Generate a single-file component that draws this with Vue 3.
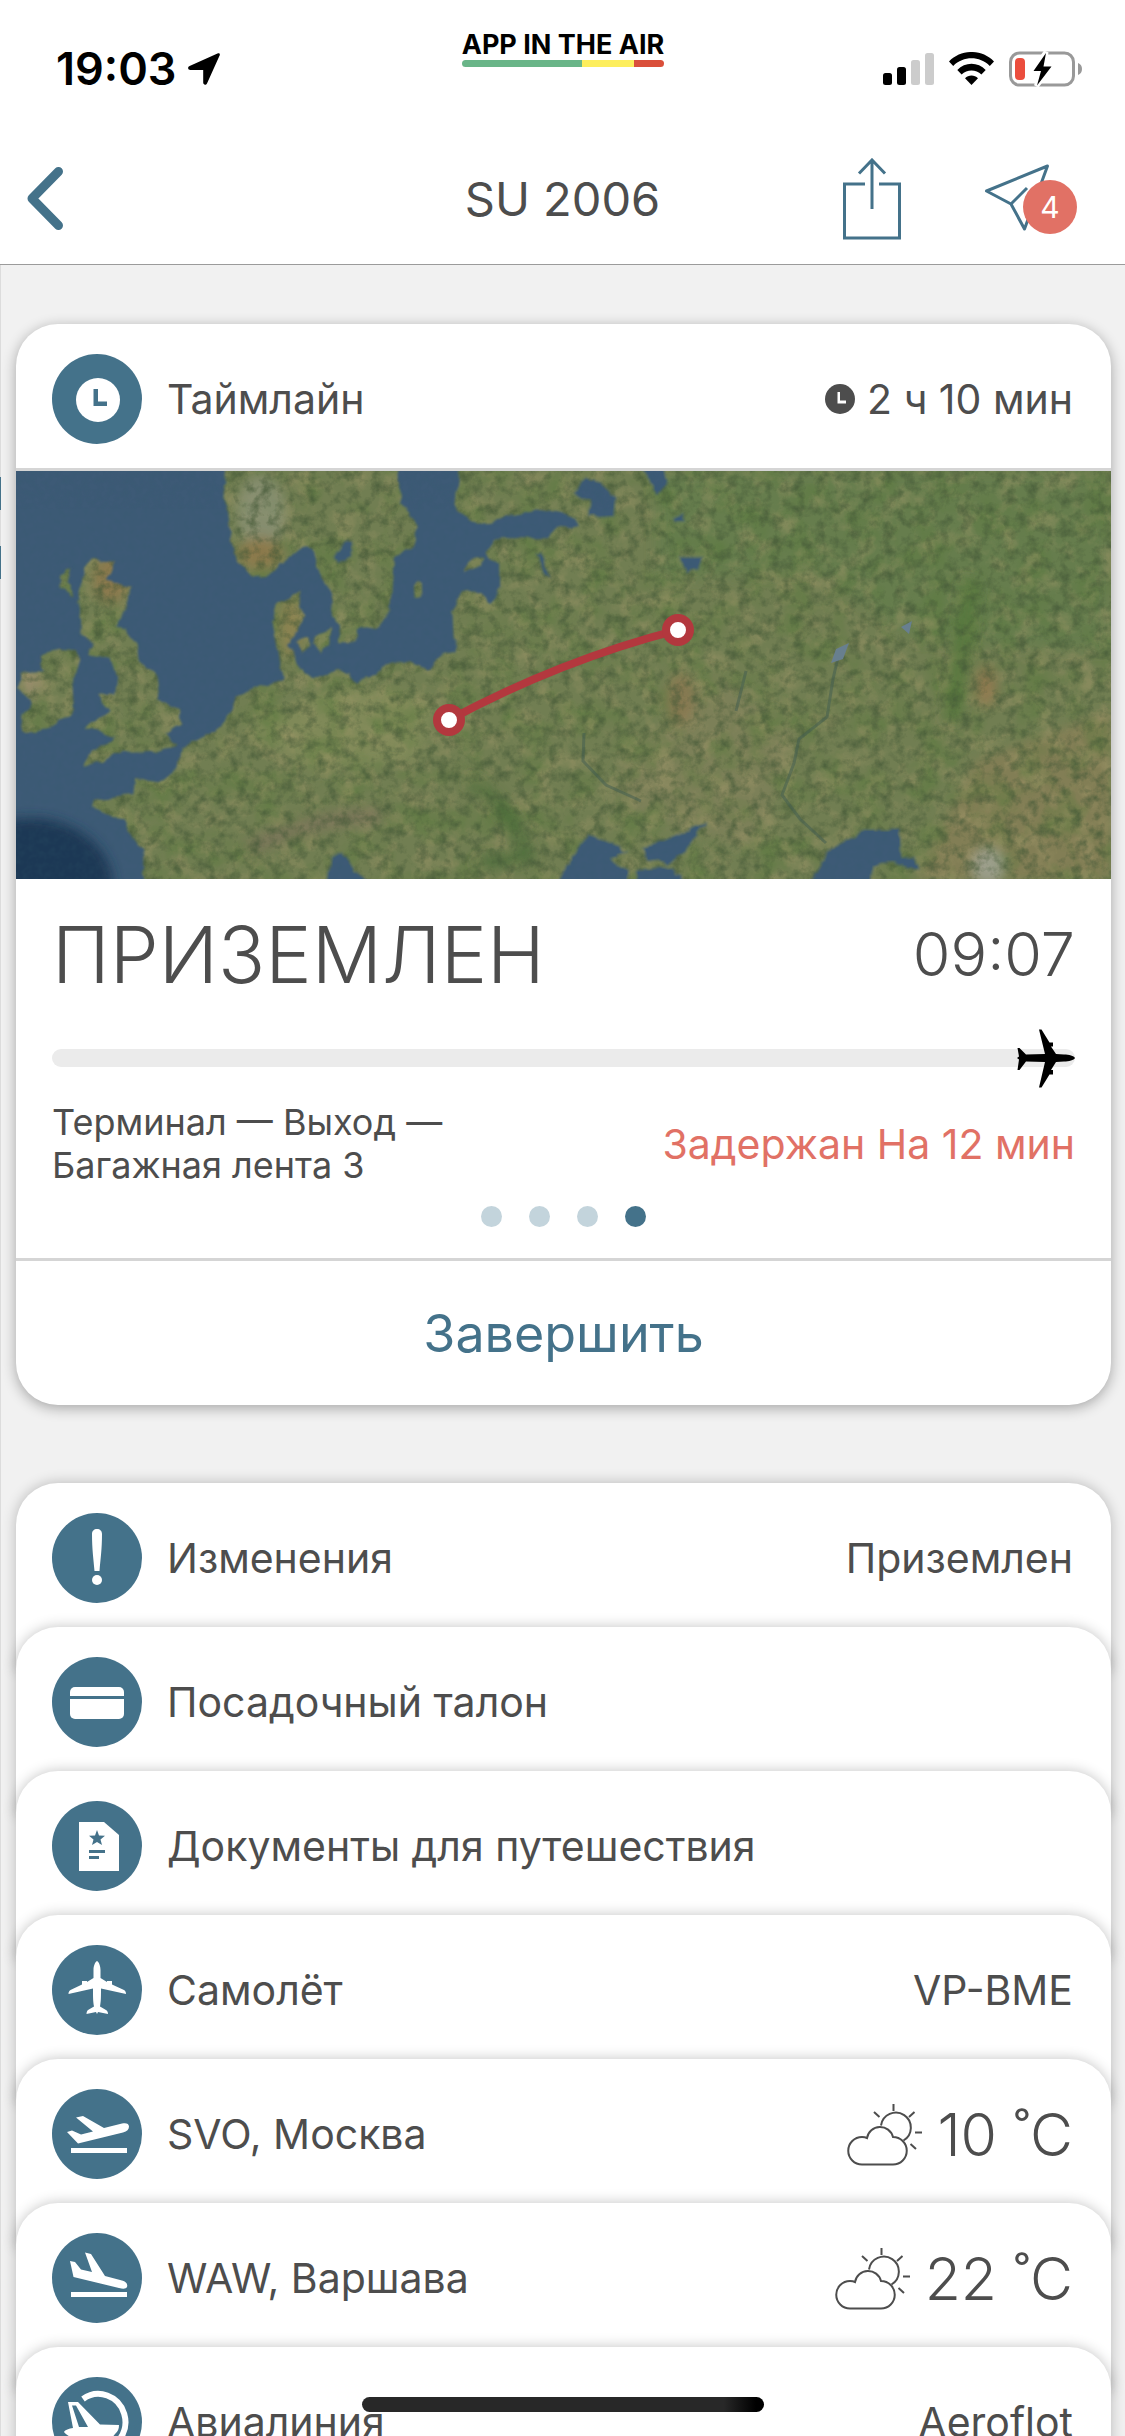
<script setup>
import { ref } from 'vue'

const pages = 4
const activePage = ref(3)

const rows = [
  { icon: 'alert', label: 'Изменения', value: 'Приземлен' },
  { icon: 'card', label: 'Посадочный талон' },
  { icon: 'document', label: 'Документы для путешествия' },
  { icon: 'plane', label: 'Самолёт', value: 'VP-BME' },
  { icon: 'takeoff', label: 'SVO, Москва', temperature: '10 ˚C' },
  { icon: 'landing', label: 'WAW, Варшава', temperature: '22 ˚C' },
  { icon: 'airline', label: 'Авиалиния', value: 'Aeroflot' }
]
</script>

<template>
  <div class="screen">
    <header class="top">
      <div class="status">
        <div class="clock">
          <span>19:03</span>
          <svg class="location" viewBox="0 0 32 32" aria-hidden="true">
            <path d="M29.500 .6 C31.200 -.2 32.400 1 31.600 2.600 L19 30.400 C18 32.600 15.200 32 15.200 29.600 V17 H2.600 C-.2 17-.8 14 1.600 13Z" />
          </svg>
        </div>
        <div class="brand">
          <strong>APP IN THE AIR</strong>
          <div class="brand-bar"><i class="ok"></i><i class="warn"></i><i class="bad"></i></div>
        </div>
        <div class="indicators">
          <svg class="signal" viewBox="0 0 51 33" aria-hidden="true">
            <rect x="0" y="21" width="9" height="12" rx="2.500" />
            <rect x="14" y="15" width="9" height="18" rx="2.500" />
            <rect x="28" y="8" width="9" height="25" rx="2.500" fill="#ccc" />
            <rect x="42" y="1" width="9" height="32" rx="2.500" fill="#ccc" />
          </svg>
          <svg class="wifi" viewBox="0 0 45 33" aria-hidden="true">
            <path d="M0 9.500 C12-3.200 33-3.200 45 9.500 L40.800 14 C30.500 3.800 14.500 3.800 4.200 14Z" />
            <path d="M8.300 18 C16 9.700 29 9.700 36.700 18 L32.400 22.600 C27 17 18 17 12.600 22.600Z" />
            <path d="M16 26.200 C19.500 22.500 25.500 22.500 29 26.200 L22.500 33Z" />
          </svg>
          <svg class="battery" viewBox="0 0 74 36" aria-hidden="true">
            <rect x="1.500" y="2" width="63" height="32" rx="9" fill="none" stroke="#999" stroke-width="3" />
            <path d="M69 12 q4 1.500 4 6 t-4 6Z" fill="#999" />
            <rect x="6" y="7" width="10" height="22" rx="4" fill="#eb4d3d" />
            <path d="M37 1 L24 20 H31.500 L27.500 35 L42.500 15.500 H35Z" stroke="#fff" stroke-width="5" />
            <path d="M37 2 L24.500 20 H32 L28 34.500 L42.500 15.500 H34.500Z" />
          </svg>
        </div>
      </div>

      <nav class="nav">
        <button class="icon-button back" aria-label="Назад">
          <svg viewBox="0 0 36 63"><path d="M31.500 4.500 L5 31.500 L31.500 58.500" /></svg>
        </button>
        <h1>SU 2006</h1>
        <div class="actions">
          <button class="icon-button share" aria-label="Поделиться">
            <svg viewBox="0 0 58 82">
              <path d="M22 26 H1.500 V80 H56.500 V26 H36 M29 51 V2 M16 15.500 L29 2 L42 15.500" />
            </svg>
          </button>
          <button class="icon-button send" aria-label="Сообщения">
            <svg viewBox="0 0 64 70">
              <path d="M1.500 27 L62.500 2 L39.500 65 L26 40 Z M26 40 L42 24" />
            </svg>
            <span class="badge">4</span>
          </button>
        </div>
      </nav>
    </header>

    <main class="content">
      <section class="card">
        <header class="row">
          <span class="disc">
            <svg viewBox="0 0 90 90" aria-hidden="true">
              <circle cx="46" cy="46" r="22" />
              <path class="cut" d="M41.500 35 H46 V47.500 H55 V52 H41.500Z" />
            </svg>
          </span>
          <h2 class="label">Таймлайн</h2>
          <span class="value duration">
            <svg viewBox="0 0 30 30" aria-hidden="true">
              <circle cx="15" cy="15" r="15" fill="#4d4d4d" />
              <path d="M12.500 8 H15 V16.500 H21 V19.500 H12.500Z" fill="#fff" />
            </svg>
            2 ч 10 мин
          </span>
        </header>

        <svg class="map" viewBox="0 0 1095 408" role="img" aria-label="Маршрут Москва — Варшава">
          <defs>
            <filter id="grain" x="0" y="0" width="100%" height="100%" color-interpolation-filters="sRGB">
              <feTurbulence type="fractalNoise" baseFrequency="0.09 0.09" numOctaves="4" seed="8" />
              <feColorMatrix values="0 0 0 0 .27  0 0 0 0 .35  0 0 0 0 .22  2.400 0 0 0 -1.050" />
            </filter>
            <filter id="sand" x="0" y="0" width="100%" height="100%" color-interpolation-filters="sRGB">
              <feTurbulence type="fractalNoise" baseFrequency="0.05 0.05" numOctaves="5" seed="21" />
              <feColorMatrix values="0 0 0 0 .64  0 0 0 0 .6  0 0 0 0 .42  0 2.600 0 0 -1.200" />
            </filter>
            <filter id="moss" x="0" y="0" width="100%" height="100%" color-interpolation-filters="sRGB">
              <feTurbulence type="fractalNoise" baseFrequency="0.03 0.03" numOctaves="4" seed="4" />
              <feColorMatrix values="0 0 0 0 .36  0 0 0 0 .48  0 0 0 0 .25  0 0 2.600 0 -1.150" />
            </filter>
            <filter id="wave" x="0" y="0" width="100%" height="100%" color-interpolation-filters="sRGB">
              <feTurbulence type="fractalNoise" baseFrequency="0.15" numOctaves="2" seed="2" />
              <feColorMatrix values="0 0 0 0 .2  0 0 0 0 .36  0 0 0 0 .42  1 0 0 0 -.35" />
            </filter>
            <filter id="coast" x="-5%" y="-5%" width="110%" height="110%">
              <feTurbulence type="fractalNoise" baseFrequency="0.06" numOctaves="3" seed="5" result="n" />
              <feDisplacementMap in="SourceGraphic" in2="n" scale="9" xChannelSelector="R" yChannelSelector="G" />
              <feGaussianBlur stdDeviation="1" />
            </filter>
            <filter id="haze" x="-50%" y="-50%" width="200%" height="200%">
              <feGaussianBlur stdDeviation="6" />
            </filter>
            <mask id="land-mask">
              <g filter="url(#coast)">
                <g transform="translate(-16 -11) scale(.3604 .3333)">
                  <g fill="#fff">
                    <path d="M630 20 L625 120 640 240 655 300 700 350 740 345 790 310 810 275 850 265 870 270 880 320 915 400 930 480 945 550 990 550 990 510 1050 500 1080 460 1090 300 1140 260 1165 200 1110 130 1105 20Z" />
                    <path d="M1275 20 L1265 150 1330 195 1400 170 1500 150 1600 170 1600 195 1540 210 1520 235 1370 235 1350 280 1385 310 1385 400 1360 430 1330 400 1280 395 1255 450 1260 570 1210 600 1190 635 1140 600 1080 615 990 665 970 640 920 635 870 660 830 625 805 560 845 470 830 440 840 390 770 425 755 480 770 560 785 660 720 680 650 710 650 750 590 820 505 860 495 920 440 970 375 960 370 1000 260 1020 255 1040 350 1085 370 1140 400 1180 400 1290 3150 1290 3150 20Z" />
                    <path d="M250 300 L320 305 290 360 365 380 360 415 335 460 325 500 350 515 380 560 385 600 430 640 440 720 500 745 500 790 460 820 490 850 440 875 310 880 290 905 235 920 250 880 290 845 320 830 240 800 270 775 310 760 270 705 320 700 325 650 305 600 250 585 260 545 220 520 225 450 215 400 240 320Z" />
                    <path d="M110 590 L150 565 205 570 220 610 200 650 205 740 180 775 100 820 55 810 60 760 90 730 50 680 60 640 120 630Z" />
                    <path d="M165 345 L195 320 185 370 205 410 175 385Z M820 545 L845 530 862 560 840 578Z M872 530 L915 500 918 550 890 578 868 555Z M1143 385 L1165 365 1166 410 1145 418Z M1285 335 L1300 300 1345 290 1330 320Z" />
                  </g>
                  <g fill="#000">
                    <path d="M925 290 L950 245 982 250 975 290 940 312Z M1488 280 L1505 275 1522 355 1505 345Z M905 1290 L915 1190 945 1172 975 1215 1040 1290Z" />
                    <g transform="translate(1554 0)">
                      <path d="M40 95 L65 55 110 65 155 110 150 170 80 175 82 125Z M215 20 H285 L297 75 270 105 245 60Z M325 290 L395 290 385 330 355 335Z M315 165 L345 160 345 185 320 185Z" />
                      <path d="M-20 1290 L30 1190 80 1125 130 1145 190 1170 140 1200 190 1225 180 1290Z M230 1165 L310 1130 405 1085 345 1180 305 1215 240 1200Z M200 1290 L215 1230 320 1220 360 1290Z" />
                      <path d="M680 1290 L740 1180 840 1110 945 1110 948 1190 990 1190 998 1232 920 1212 865 1215 860 1290Z" />
                    </g>
                  </g>
                </g>
              </g>
            </mask>
          </defs>

          <rect width="1095" height="408" fill="#3d5a76" />
          <ellipse cx="15" cy="415" rx="82" ry="68" fill="#1d3855" filter="url(#haze)" />
          <rect width="1095" height="408" filter="url(#wave)" opacity=".35" />

          <g mask="url(#land-mask)">
            <rect width="1095" height="408" fill="#717e52" />
            <g filter="url(#haze)">
              <path d="M225 258 L275 235 Q330 200 420 230 L400 290 300 300Z" fill="#7f8958" />
              <path d="M600 300 L700 200 780 260 740 380 600 340Z" fill="#7b8059" />
              <path d="M640 0 H1095 V180 L900 170 800 100 640 110Z" fill="#667d4d" />
              <path d="M960 290 L1095 240 V408 H900Z" fill="#827e54" />
            </g>
            <rect width="1095" height="408" filter="url(#moss)" opacity=".6" />
            <rect width="1095" height="408" filter="url(#sand)" opacity=".45" />
            <g filter="url(#haze)" opacity=".8">
              <ellipse cx="245" cy="42" rx="24" ry="38" fill="#929780" opacity=".8" />
              <ellipse cx="244" cy="82" rx="22" ry="16" fill="#93794b" />
              <ellipse cx="95" cy="108" rx="18" ry="24" fill="#93794d" />
              <ellipse cx="14" cy="213" rx="9" ry="18" fill="#a39173" />
              <ellipse cx="275" cy="157" rx="12" ry="30" fill="#918451" />
              <path d="M232 378 Q300 345 365 345" fill="none" stroke="#7d755c" stroke-width="16" />
              <path d="M452 308 Q495 335 512 385 L460 394" fill="none" stroke="#476a38" stroke-width="12" />
              <ellipse cx="665" cy="228" rx="14" ry="26" fill="#8c7851" />
              <path d="M955 110 L936 250" fill="none" stroke="#52773a" stroke-width="18" />
              <ellipse cx="972" cy="395" rx="17" ry="19" fill="#a3a598" />
              <ellipse cx="970" cy="215" rx="10" ry="20" fill="#957850" />
            </g>
            <rect width="1095" height="408" filter="url(#grain)" opacity=".7" />
            <path d="M824 178 L817 208 811 246 783 268 778 292 766 324 784 348 810 372 M568 262 L567 290 590 314 625 330 M730 200 L720 240" fill="none" stroke="#3f5c50" stroke-width="3" opacity=".5" />
            <path d="M820 178 L833 172 827 188 815 192Z M885 156 L896 150 893 163Z" fill="#687f8f" />
          </g>

          <path d="M433 249 Q545 189 662 159" fill="none" stroke="#b3383e" stroke-width="8" />
          <g fill="#fff" stroke="#b3383e" stroke-width="8">
            <circle cx="433" cy="249" r="12" />
            <circle cx="662" cy="159" r="12" />
          </g>
        </svg>

        <div class="flight">
          <div class="state">
            <strong>ПРИЗЕМЛЕН</strong>
            <time>09:07</time>
          </div>
          <div class="track">
            <svg viewBox="0 0 58 59" aria-hidden="true">
              <path d="M58 29 C57 31 52 32.500 47 32.500 L39 33 34 41 H36 V45.500 H32.500 L24.500 58.500 H22 L28 33 9 32.500 2.500 41 H.5 L2 30.500 0 29 2 27.500 .5 19 H2.500 L9 25.500 28 25 22 .5 H24.500 L32.500 13.500 H36 V17.500 H34 L39 25 47 25.500 C52 25.500 57 27 58 29Z" />
            </svg>
          </div>
          <div class="details">
            <p>Терминал — Выход —<br />Багажная лента 3</p>
            <span class="delay">Задержан На 12 мин</span>
          </div>
          <div class="dots">
            <button
              v-for="page in pages"
              :key="page"
              :class="{ active: page - 1 === activePage }"
              :aria-label="`Страница ${page}`"
              @click="activePage = page - 1"
            ></button>
          </div>
        </div>

        <button class="finish">Завершить</button>
      </section>

      <ul class="stack">
        <li v-for="row in rows" :key="row.label">
          <button class="row">
            <span class="disc">
              <svg viewBox="0 0 90 90" aria-hidden="true">
                <template v-if="row.icon === 'alert'">
                  <path d="M45 16 C48 16 50 18 50 21 C50 36 48.500 46 47.500 58 H42.500 C41.500 46 40 36 40 21 C40 18 42 16 45 16Z" />
                  <circle cx="45" cy="67" r="5" />
                </template>
                <template v-else-if="row.icon === 'card'">
                  <rect x="18" y="30" width="54" height="32" rx="5" />
                  <rect class="cut" x="18" y="39" width="54" height="3" />
                </template>
                <template v-else-if="row.icon === 'document'">
                  <path d="M27 21 H52 L67 34 V70 H27Z" />
                  <path class="cut" d="M45 29 L47 34.500 53 34.700 48.500 38.400 50 44 45 41 40 44 41.500 38.400 37 34.700 43 34.500Z M37 49 H53 V52 H37Z M37 55 H47 V58 H37Z" />
                </template>
                <path v-else-if="row.icon === 'plane'" d="M45 16 C47 17 48.500 21 48.500 25 V33 L55 37 V36 H60 V39.500 L72 45 C73.500 46 74 47 74 49 L49 43.500 C49 52 49 56 48 61.500 L54 65 C55.500 66 56 67 56 69 L46 67 45 69 44 67 34.500 69 C34.500 67 35 66 36 65 L42 61.500 C41 56 41 52 41 43.500 L16.500 49 C16.500 47 17 46 18.500 45 L30 39.500 V36 H35 V37 L41.500 33 V25 C41.500 21 43 17 45 16Z" />
                <template v-else-if="row.icon === 'takeoff'">
                  <path d="M15 43 L20 41.500 29 45.500 41 42.500 24 28.500 31 27 52 39 70 34.500 C74 33.500 77 34.500 77 37.500 C77 40.500 75 42.500 71 43.500 L26 54.500Z" />
                  <rect x="19" y="59" width="56" height="5" />
                </template>
                <template v-else-if="row.icon === 'landing'">
                  <path d="M18 28 L23 29 29 36.500 40 39 33 19.500 39 21 53 43 70 47.500 C74 48.500 76 51 75 54 C74 56 71 56 67 55 L21.500 44Z" />
                  <rect x="19" y="59" width="56" height="5" />
                </template>
                <template v-else>
                  <path class="ring" d="M31 22 A27 28 0 1 1 46 73" />
                  <path fill-rule="evenodd" d="M16 25 H26 L48 47.500 67 48 C67 52 66 54 63 57 L56 66 H24 C20 60 14 58 12 55 C13 53 17 51.500 21 51Z M20 28.500 L27 50 H36 L24 28.500Z" />
                </template>
              </svg>
            </span>
            <span class="label">{{ row.label }}</span>
            <span v-if="row.value" class="value">{{ row.value }}</span>
            <span v-if="row.temperature" class="value weather">
              <svg viewBox="0 0 76 63" aria-hidden="true">
                <path d="M15 61.500 A13.700 13.700 0 0 1 15 34 Q18 34 20 35 A13.300 13.300 0 0 1 46 34 A13.700 13.700 0 0 1 46 61.500Z" />
                <path d="M34 22.500 A15 15 0 1 1 56.500 37.500 M46.500 1 V8 M27 9 L32.500 14 M67.500 9 L62 14 M68 29.500 H75 M63.500 41 L69 46" />
              </svg>
              {{ row.temperature }}
            </span>
          </button>
        </li>
      </ul>
    </main>

    <div class="neighbour" aria-hidden="true"></div>
    <div class="home" aria-hidden="true"></div>
  </div>
</template>

<style>
body {
  margin: 0;
  background: #f1f1f1;
}
</style>

<style scoped>
.screen {
  --blue: #44728a;
  --ink: #4d4d4d;
  --coral: #e17165;
  position: relative;
  display: flex;
  flex-direction: column;
  height: 100vh;
  overflow: hidden;
  background: #f1f1f1;
  color: var(--ink);
  font-family: Inter, "Liberation Sans", sans-serif;
  font-size: 41px;
}

svg {
  display: block;
  flex: none;
}

button {
  margin: 0;
  padding: 0;
  border: 0;
  background: none;
  color: inherit;
  font: inherit;
  cursor: pointer;
}

.top {
  flex: none;
  background: #fff;
  border-bottom: 1px solid #9b9b9b;
}

.status {
  display: grid;
  grid-template-columns: 1fr auto 1fr;
  align-items: center;
  height: 137px;
  padding: 0 42px 0 43px;
  color: #000;
}

.clock {
  display: flex;
  align-items: center;
  gap: 12px;
  padding-left: 13px;
  font-size: 45px;
  font-weight: 600;
}

.location {
  width: 32px;
}

.brand {
  align-self: start;
  padding-top: 30px;
  font-size: 27px;
  line-height: 30px;
}

.brand strong {
  display: block;
}

.brand-bar {
  display: flex;
  height: 7px;
  border-radius: 4px;
  overflow: hidden;
}

.ok {
  flex: 120;
  background: #69b588;
}

.warn {
  flex: 52;
  background: #fdee5d;
}

.bad {
  flex: 30;
  background: #da4f3a;
}

.indicators {
  display: flex;
  justify-content: flex-end;
  align-items: center;
  gap: 15px;
}

.signal {
  width: 51px;
}

.wifi {
  width: 45px;
}

.battery {
  width: 74px;
}

.nav {
  display: grid;
  grid-template-columns: 1fr auto 1fr;
  align-items: center;
  box-sizing: border-box;
  height: 127px;
  padding: 0 48px 4px;
}

.nav h1 {
  margin: 0;
  font-size: 47px;
  font-weight: 400;
}

.icon-button svg {
  fill: none;
  stroke: var(--blue);
  stroke-width: 3;
}

.back {
  justify-self: start;
  margin-left: -21px;
}

.back svg {
  width: 36px;
  stroke-width: 9;
  stroke-linecap: round;
  stroke-linejoin: round;
}

.actions {
  display: flex;
  justify-content: flex-end;
  align-items: center;
  gap: 84px;
}

.share svg {
  width: 58px;
}

.send {
  position: relative;
  padding-right: 28px;
}

.send svg {
  width: 64px;
  stroke-linejoin: round;
}

.badge {
  position: absolute;
  right: 0;
  bottom: 0;
  width: 54px;
  height: 54px;
  border-radius: 50%;
  background: var(--coral);
  color: #fff;
  font-size: 30px;
  line-height: 54px;
  text-align: center;
}

.content {
  flex: 1;
  min-height: 0;
  overflow: hidden;
  padding: 59px 14px 0 16px;
}

.card {
  border-radius: 42px;
  background: #fff;
  box-shadow: 0 3px 14px rgba(0, 0, 0, 0.32);
  overflow: hidden;
}

.row {
  display: flex;
  align-items: center;
  gap: 25px;
  box-sizing: border-box;
  width: 100%;
  height: 144px;
  padding: 30px 38px 24px 36px;
  text-align: left;
}

.disc {
  flex: none;
  width: 90px;
  height: 90px;
  border-radius: 50%;
  background: var(--blue);
}

.disc svg {
  fill: #fff;
}

.disc .cut {
  fill: var(--blue);
}

.disc .ring {
  fill: none;
  stroke: #fff;
  stroke-width: 6;
}

.label {
  margin: 0;
  font-size: 41px;
  font-weight: 400;
}

.value {
  margin-left: auto;
}

.duration {
  display: flex;
  align-items: center;
  gap: 12px;
}

.duration svg {
  width: 30px;
}

.map {
  width: 100%;
  border-top: 3px solid #d5d5d5;
}

.flight {
  padding: 36px 36px 31px;
}

.state {
  display: flex;
  justify-content: space-between;
  align-items: center;
  height: 78px;
}

.state strong {
  font-size: 78px;
  font-weight: 300;
}

.state time {
  font-size: 61px;
  font-weight: 300;
}

.track {
  display: flex;
  justify-content: flex-end;
  align-items: center;
  height: 18px;
  margin-top: 56px;
  border-radius: 9px;
  background: #ebebeb;
}

.track svg {
  width: 58px;
}

.details {
  display: flex;
  justify-content: space-between;
  align-items: center;
  margin-top: 34px;
}

.details p {
  margin: 0;
  font-size: 36px;
  line-height: 43px;
}

.delay {
  color: var(--coral);
}

.dots {
  display: flex;
  justify-content: center;
  gap: 27px;
  margin-top: 19px;
}

.dots button {
  width: 21px;
  height: 21px;
  border-radius: 50%;
  background: #c3d4dc;
}

.dots .active {
  background: var(--blue);
}

.finish {
  display: block;
  width: 100%;
  height: 147px;
  border-top: 3px solid #d5d5d5;
  color: var(--blue);
  font-size: 52px;
}

.stack {
  margin: 78px 0 0;
  padding: 0;
  list-style: none;
}

.stack li {
  position: relative;
  padding-bottom: 44px;
  border-radius: 42px 42px 0 0;
  background: #fff;
  box-shadow: 0 0 14px rgba(0, 0, 0, 0.24);
}

.stack li + li {
  margin-top: -44px;
}

.weather {
  display: flex;
  align-items: center;
  gap: 14px;
  font-size: 59px;
  font-weight: 300;
}

.weather svg {
  width: 76px;
  fill: none;
  stroke: var(--ink);
  stroke-width: 2;
}

/* Sliver of the previous flight's page at the left edge */
.neighbour {
  position: absolute;
  top: 265px;
  bottom: 0;
  left: 0;
  width: 1px;
  background: linear-gradient(
    #dcdcdc 212px,
    #44728a 212px 245px,
    #dcdcdc 245px 281px,
    #44728a 281px 314px,
    #dcdcdc 314px
  );
}

.home {
  position: absolute;
  bottom: 24px;
  left: 50%;
  width: 402px;
  height: 15px;
  margin-left: -201px;
  border-radius: 8px;
  background: linear-gradient(90deg, #282828 90%, #000 98%);
}
</style>
